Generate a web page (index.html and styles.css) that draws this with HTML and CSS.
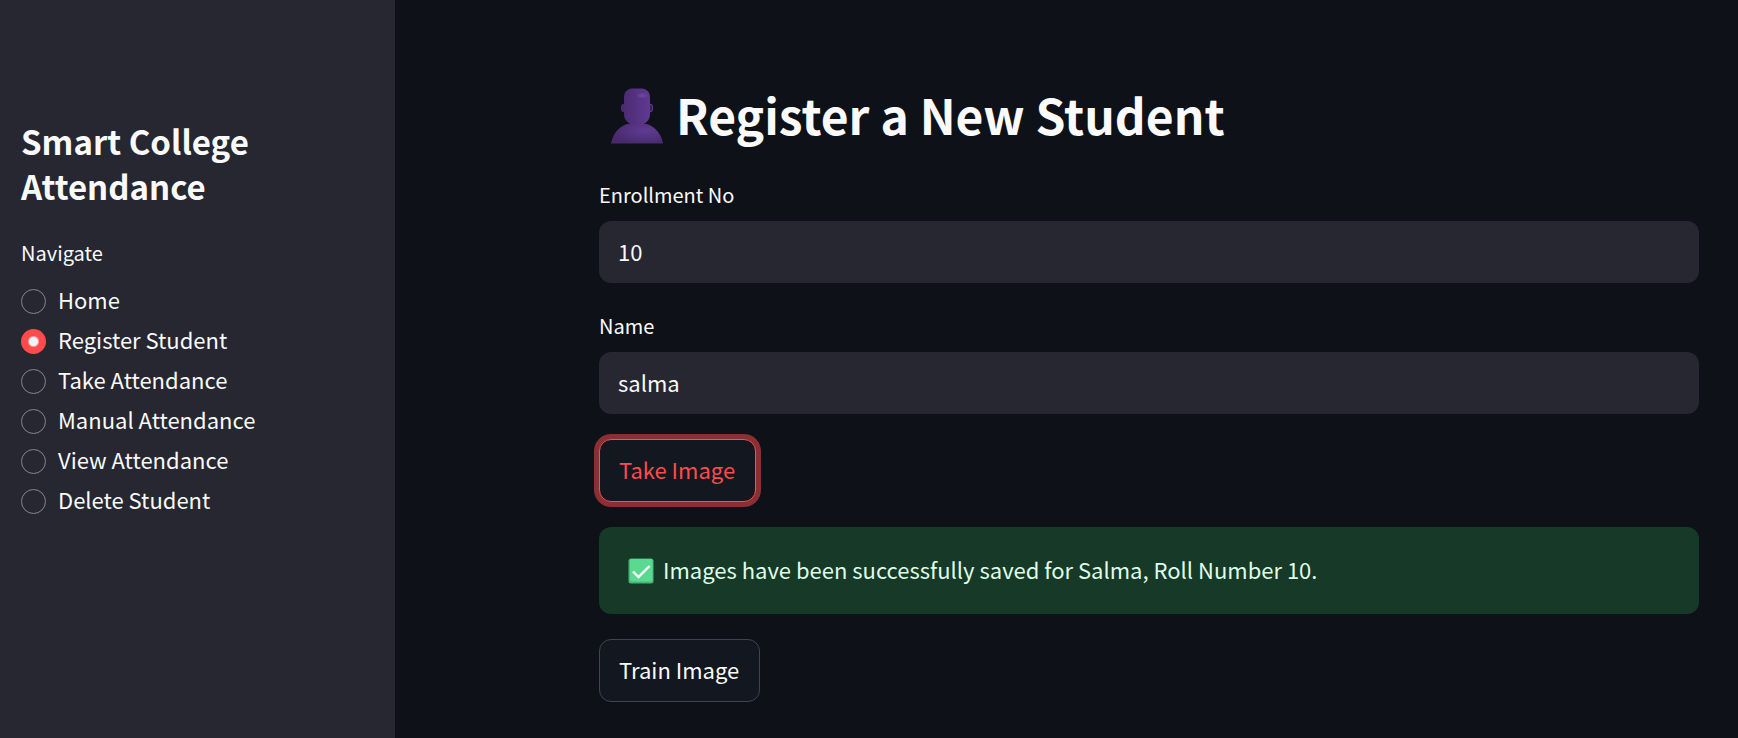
FILE: index.html
```html
<!DOCTYPE html>
<html lang="en">
<head>
<meta charset="utf-8">
<meta name="viewport" content="width=device-width, initial-scale=1">
<title>Smart College Attendance</title>
<link rel="stylesheet" href="styles.css">
</head>
<body>
<div class="app">
  <aside class="sidebar">
    <h2 class="sidebar-title">Smart College Attendance</h2>
    <fieldset class="nav">
      <legend class="label nav-label">Navigate</legend>
      <label class="nav-item"><input class="radio" type="radio" name="page"><span class="nav-text">Home</span></label>
      <label class="nav-item"><input class="radio" type="radio" name="page" checked><span class="nav-text">Register Student</span></label>
      <label class="nav-item"><input class="radio" type="radio" name="page"><span class="nav-text">Take Attendance</span></label>
      <label class="nav-item"><input class="radio" type="radio" name="page"><span class="nav-text">Manual Attendance</span></label>
      <label class="nav-item"><input class="radio" type="radio" name="page"><span class="nav-text">View Attendance</span></label>
      <label class="nav-item"><input class="radio" type="radio" name="page"><span class="nav-text">Delete Student</span></label>
    </fieldset>
  </aside>
  <main class="main">
    <h1 class="title">
      <svg class="person" viewBox="0 0 54 56" aria-hidden="true">
        <defs>
          <linearGradient id="head" x1="0" x2="1" y1="0" y2="0">
            <stop offset="0" stop-color="#4d2b73"/>
            <stop offset="1" stop-color="#5f3a92"/>
          </linearGradient>
          <radialGradient id="body" cx=".68" cy=".35" r=".7">
            <stop offset="0" stop-color="#603c93"/>
            <stop offset="1" stop-color="#482a6c"/>
          </radialGradient>
          <radialGradient id="shine">
            <stop offset="0" stop-color="#7048a8"/>
            <stop offset="1" stop-color="#7048a8" stop-opacity="0"/>
          </radialGradient>
        </defs>
        <ellipse cx="14" cy="20" rx="3.200" ry="4.200" fill="#4b2a70"/>
        <ellipse cx="40" cy="20" rx="3.200" ry="4.200" fill="#5b378b"/>
        <ellipse cx="40.500" cy="20" rx="1.600" ry="3" fill="#3a2059"/>
        <path d="M1 55.500C3 43 13 36 20 35.500h14C41 36 51 43 53 55.500z" fill="url(#body)"/>
        <path d="M22 .500h10c5 .500 8 4 8 9v16c0 5-2 8.500-7 10.500H21c-5-2-7-5.500-7-10.500v-16c0-5 3-8.500 8-9z" fill="url(#head)"/>
        <ellipse cx="32" cy="7.500" rx="6" ry="3" fill="url(#shine)"/>
      </svg>
      <span class="title-text">Register a New Student</span>
    </h1>
    <form class="form">
      <div class="field">
        <label class="label" for="enrollment">Enrollment No</label>
        <input class="input" id="enrollment" type="text" value="10">
      </div>
      <div class="field">
        <label class="label" for="name">Name</label>
        <input class="input" id="name" type="text" value="salma">
      </div>
      <button class="button button-active" type="button">Take Image</button>
      <div class="alert" role="status">
        <svg class="tick" viewBox="0 0 26 26" aria-hidden="true">
          <rect x=".500" y=".500" width="25" height="25" rx="2.500" fill="#45b877"/>
          <rect x="2" y="1" width="22.500" height="22.500" rx="1.500" fill="#5ad990"/>
          <path d="M5 13.500l5.500 5.500L21.500 8" fill="none" stroke="#fff" stroke-width="2.400"/>
        </svg>
        <span class="alert-text">Images have been successfully saved for Salma, Roll Number 10.</span>
      </div>
      <button class="button" type="button">Train Image</button>
    </form>
  </main>
</div>
</body>
</html>
```
FILE: styles.css
```css
* {
  box-sizing: border-box;
}

body {
  margin: 0;
  background: #0e1117;
  color: #fafafa;
  font-family: "Noto Sans CJK JP", "Noto Sans", sans-serif;
  font-size: 22px;
  line-height: 40px;
}

.app {
  display: flex;
  min-height: 100vh;
}

.sidebar {
  flex: 0 0 395px;
  padding: 119px 21px 24px;
  background: #262730;
}

.sidebar-title {
  margin: 0 0 26px;
  font-size: 33px;
  font-weight: 700;
  line-height: 45px;
}

.nav {
  display: flex;
  flex-direction: column;
  margin: 0;
  padding: 0;
  border: 0;
}

.label {
  font-size: 20px;
  line-height: 36px;
}

.nav-label {
  padding: 0 0 10px;
}

.nav-item {
  display: flex;
  align-items: center;
  gap: 12px;
}

.nav-text {
  padding-bottom: 4px;
  line-height: 36px;
}

.radio {
  appearance: none;
  flex: none;
  width: 25px;
  height: 25px;
  margin: 0;
  border: 1px solid #85868b;
  border-radius: 50%;
}

.radio:checked {
  border: 0;
  background: radial-gradient(circle, #f0f2f6 4px, #ff4b4b 6px);
}

.main {
  flex: 1;
  min-width: 0;
  padding: 84px 39px 32px 204px;
}

.title {
  display: flex;
  align-items: center;
  gap: 12px;
  margin: 0 0 29px;
  padding-left: 11px;
  font-size: 48px;
  font-weight: 700;
  line-height: 60px;
}

.title-text {
  padding-bottom: 4px;
}

.person {
  flex: none;
  width: 54px;
  height: 56px;
}

.form {
  display: flex;
  flex-direction: column;
  align-items: flex-start;
  gap: 25px;
}

.field {
  display: flex;
  flex-direction: column;
  gap: 8px;
  width: 100%;
}

.input {
  width: 100%;
  height: 62px;
  padding: 0 19px 3px;
  border: 0;
  border-radius: 12px;
  background: #262730;
  color: inherit;
  font: inherit;
}

.button {
  height: 63px;
  padding: 0 20px 3px 19px;
  border: 1px solid #41444c;
  border-radius: 12px;
  background: #131720;
  color: inherit;
  font: inherit;
}

.button-active {
  border-color: #ff4b4b;
  box-shadow: 0 0 0 5px #8a2f33;
  color: #ff4b4b;
}

.alert {
  display: flex;
  align-items: center;
  gap: 9px;
  width: 100%;
  min-height: 87px;
  padding: 20px 29px;
  border-radius: 12px;
  background: #173928;
  color: #dffde9;
}

.alert-text {
  padding-bottom: 3px;
}

.tick {
  flex: none;
  width: 26px;
  height: 26px;
}
```
